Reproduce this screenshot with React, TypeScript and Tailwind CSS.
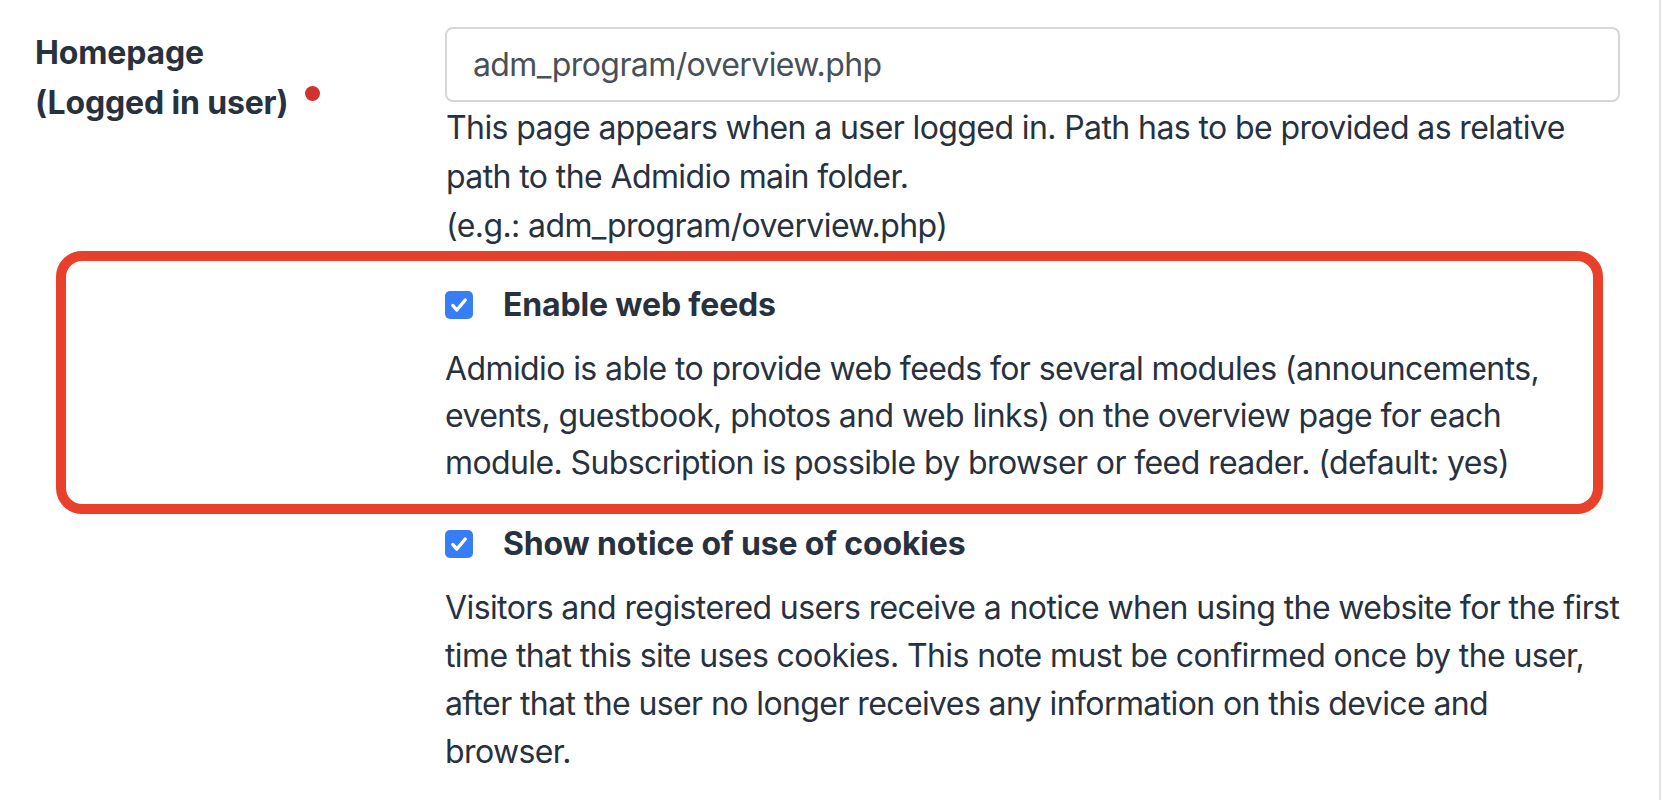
import React from 'react';

function Check() {
  return (
    <span className="w-[28px] h-[28px] rounded-[5px] bg-[#377df6] flex items-center justify-center shrink-0">
      <svg width="24" height="24" viewBox="0 0 20 20" fill="none">
        <path d="M4.8 10.4l3.4 3.8 7-8.4" stroke="#fff" strokeWidth="2.8" strokeLinecap="round" strokeLinejoin="round" />
      </svg>
    </span>
  );
}

export default function App() {
  return (
    <div className="w-[1661px] min-h-[800px] bg-white border-r-2 border-[#e2e2e2] pt-[27px] font-['Inter','Liberation_Sans',sans-serif] text-[32px] leading-[48px] tracking-[-0.6px] text-[#28313e]">
      {/* Homepage row */}
      <div className="flex">
        <div className="w-[445px] shrink-0 pl-[35px] pt-[1px] font-bold leading-[50px] tracking-[-0.15px]">
          Homepage
          <br />
          (Logged in user)
          <span className="inline-block w-[15px] h-[15px] rounded-full bg-[#d0342c] ml-[17px] align-top mt-[8px]"></span>
        </div>
        <div className="w-[1175px]">
          <div className="h-[75px] border-2 border-[#d3d7dc] rounded-[8px] px-[26px] flex items-center text-[#495057]">
            adm_program/overview.php
          </div>
          <p className="pl-[1px] mt-[1px] leading-[49px]">
            This page appears when a user logged in. Path has to be provided as relative
            <br />
            path to the Admidio main folder.
            <br />
            (e.g.: adm_program/overview.php)
          </p>
        </div>
      </div>

      {/* highlighted option */}
      <div className="ml-[56px] w-[1547px] mt-[1px] border-[10px] border-[#e8402b] rounded-[26px] pl-[379px] pt-[20px] pb-[18px]">
        <label className="flex items-center h-[48px] gap-[30px]">
          <Check />
          <span className="font-bold tracking-[-0.15px]">Enable web feeds</span>
        </label>
        <p className="mt-[16px] leading-[47px] whitespace-nowrap">
          Admidio is able to provide web feeds for several modules (announcements,
          <br />
          events, guestbook, photos and web links) on the overview page for each
          <br />
          module. Subscription is possible by browser or feed reader. (default: yes)
        </p>
      </div>

      {/* cookies option */}
      <div className="pl-[445px] pt-[6px]">
        <label className="flex items-center h-[48px] gap-[30px]">
          <Check />
          <span className="font-bold tracking-[-0.15px]">Show notice of use of cookies</span>
        </label>
        <p className="mt-[16px] whitespace-nowrap">
          Visitors and registered users receive a notice when using the website for the first
          <br />
          time that this site uses cookies. This note must be confirmed once by the user,
          <br />
          after that the user no longer receives any information on this device and
          <br />
          browser.
        </p>
      </div>
    </div>
  );
}
